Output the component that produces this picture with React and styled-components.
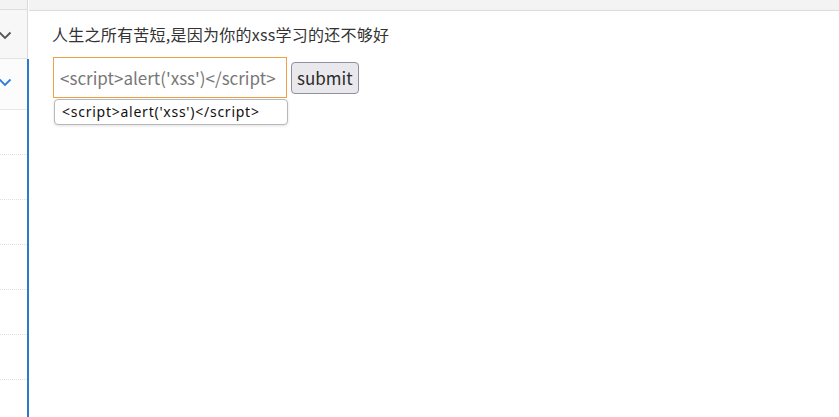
import styled, { createGlobalStyle } from "styled-components";

const GlobalStyle = createGlobalStyle`
  html, body {
    margin: 0;
    padding: 0;
    background: #fff;
    height: 100%;
  }
  #root {
    height: 100%;
  }
`;

const Page = styled.div`
  display: flex;
  height: 417px;
  overflow: hidden;
  font-family: "Noto Sans CJK SC", "Noto Sans", sans-serif;
`;

const Sidebar = styled.div`
  width: 29px;
  flex: none;
  display: flex;
  flex-direction: column;
  overflow: hidden;
`;

const SideCap = styled.div`
  flex: none;
  width: 27px;
  height: 9px;
  background: #f3f3f3;
  border-right: 1px solid #d9d9d9;
  border-bottom: 1px solid #dedede;
`;

const SideHead = styled.div`
  flex: none;
  width: 28px;
  height: 49px;
  background: #f7f7f7;
  border-right: 1px solid #d9d9d9;
  border-bottom: 1px solid #e2e2e2;
  display: flex;
  align-items: center;
  padding-top: 2px;
  box-sizing: border-box;
`;

const SideGroup = styled.div`
  flex: 1;
  width: 27px;
  border-right: 2px solid #2b7bc9;
  display: flex;
  flex-direction: column;
  overflow: hidden;
`;

const ActiveRow = styled.div`
  flex: none;
  height: 51px;
  background: #fcfcfc;
  border-bottom: 1px solid #e6e6e6;
  display: flex;
  align-items: center;
  padding-bottom: 3px;
  box-sizing: border-box;
`;

const SubRow = styled.div`
  height: 45px;
  flex: none;
  border-bottom: 1px dotted #e0e0e0;
  box-sizing: border-box;
`;

const Chevron = ({ color }) => (
  <svg width="14" height="9" viewBox="0 0 14 9" style={{ marginLeft: -2 }}>
    <polyline
      points="1.5,1.5 7,7 12.5,1.5"
      fill="none"
      stroke={color}
      strokeWidth="1.8"
    />
  </svg>
);

const Main = styled.div`
  flex: 1;
  display: flex;
  flex-direction: column;
`;

const TopBar = styled.div`
  height: 10px;
  background: #f3f3f3;
  border-bottom: 1px solid #dcdcdc;
`;

const Content = styled.div`
  padding: 12px 0 0 23px;
`;

const Motto = styled.p`
  margin: 0;
  font-size: 16px;
  line-height: 22px;
  letter-spacing: 0.25px;
  color: #333;
`;

const Form = styled.form`
  display: flex;
  align-items: center;
  gap: 4px;
  margin-top: 12px;
  margin-left: 1px;
  position: relative;
`;

const Field = styled.input`
  width: 234px;
  height: 41px;
  box-sizing: border-box;
  border: 1px solid #f0a148;
  outline: none;
  padding: 0 6px;
  font-family: "Noto Sans CJK SC", "Noto Sans", sans-serif;
  font-size: 17px;
  color: #777;
  background: #fff;
`;

const Submit = styled.button`
  height: 32px;
  padding: 0 5px;
  background: #e9e9ed;
  border: 1px solid #8f8f9d;
  border-radius: 4px;
  font-family: "Noto Sans CJK SC", "Noto Sans", sans-serif;
  font-size: 17px;
  color: #2b2b2b;
`;

const Suggest = styled.div`
  position: absolute;
  left: 1px;
  top: 42px;
  width: 234px;
  height: 26px;
  box-sizing: border-box;
  background: #fff;
  border: 1px solid #b8b8b8;
  border-radius: 4px;
  box-shadow: 0 1px 3px rgba(0, 0, 0, 0.12);
  padding-left: 7px;
  font-family: "Noto Sans", sans-serif;
  font-size: 14px;
  letter-spacing: 0.75px;
  line-height: 24px;
  color: #111;
`;

export default function App() {
  const subRows = [0, 1, 2, 3, 4, 5, 6];
  return (
    <>
      <GlobalStyle />
      <Page>
        <Sidebar>
          <SideCap />
          <SideHead>
            <Chevron color="#555" />
          </SideHead>
          <SideGroup>
            <ActiveRow>
              <Chevron color="#2b7fd6" />
            </ActiveRow>
            {subRows.map((i) => (
              <SubRow key={i} />
            ))}
          </SideGroup>
        </Sidebar>
        <Main>
          <TopBar />
          <Content>
            <Motto>人生之所有苦短,是因为你的xss学习的还不够好</Motto>
            <Form onSubmit={(e) => e.preventDefault()}>
              <Field defaultValue="<script>alert('xss')</script>" />
              <Submit type="submit">submit</Submit>
              <Suggest>{"<script>alert('xss')</script>"}</Suggest>
            </Form>
          </Content>
        </Main>
      </Page>
    </>
  );
}
